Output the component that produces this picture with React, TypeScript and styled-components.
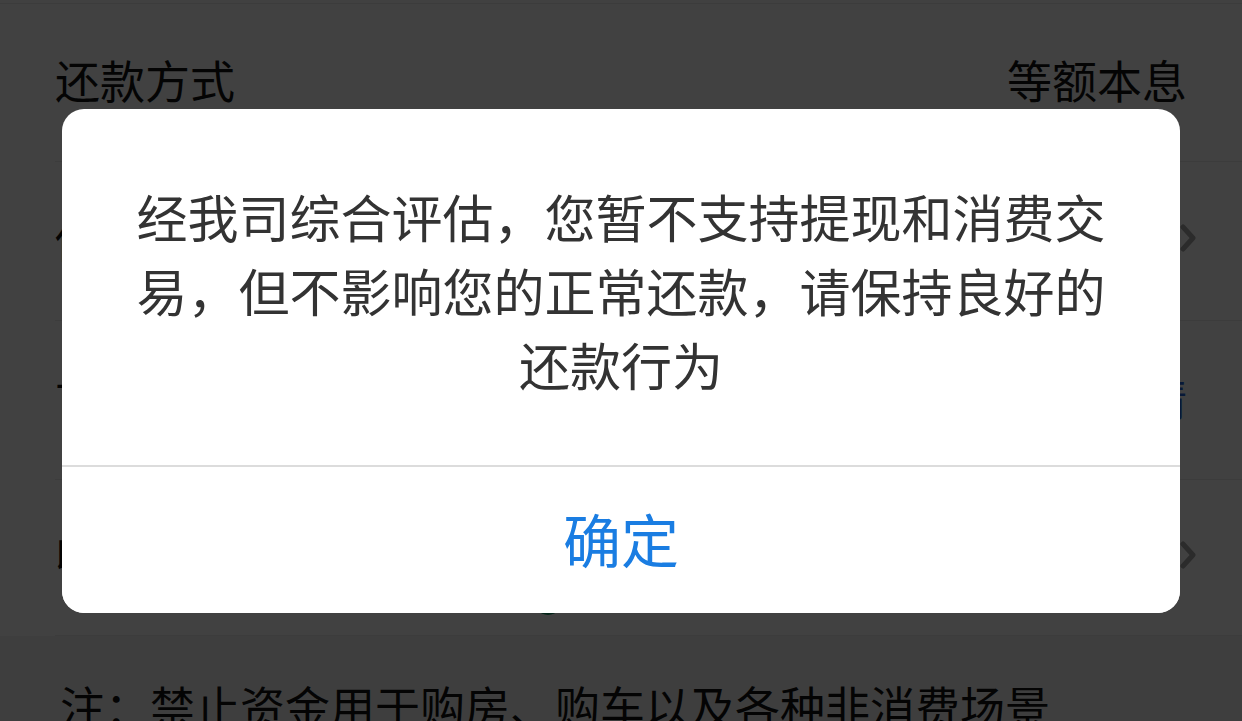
import React from "react";
import styled, { createGlobalStyle } from "styled-components";

const GlobalStyle = createGlobalStyle`
  html, body {
    margin: 0;
    padding: 0;
    width: 1242px;
    height: 721px;
    overflow: hidden;
    background: #ffffff;
    font-family: "Noto Sans CJK SC", "Noto Sans", sans-serif;
  }
`;

const Page = styled.div`
  width: 1242px;
  height: 721px;
  overflow: hidden;
  display: flex;
  flex-direction: column;
  background: #ffffff;
  padding-top: 3px;
  box-sizing: border-box;
`;

const List = styled.div`
  display: flex;
  flex-direction: column;
  border-top: 1px solid #ececec;
`;

const Row = styled.div<{ $h?: number; $arrow?: boolean }>`
  position: relative;
  height: ${(p) => p.$h ?? 158}px;
  box-sizing: border-box;
  margin-left: 55px;
  padding-right: ${(p) => (p.$arrow ? 46 : 55)}px;
  padding-bottom: 6px;
  display: flex;
  align-items: center;
  justify-content: space-between;
  border-bottom: 1px solid #ececec;
  font-size: 45px;
  color: #111111;
`;

const Label = styled.span`
  white-space: nowrap;
`;

const Value = styled.span<{ $link?: boolean }>`
  white-space: nowrap;
  color: ${(p) => (p.$link ? "#1f5fd6" : "#111111")};
`;

const Chevron = styled.svg`
  width: 16px;
  height: 28px;
  display: block;
`;

const BankDot = styled.span`
  position: absolute;
  left: 478px;
  top: 105px;
  width: 30px;
  height: 30px;
  border-radius: 50%;
  background: #0b8a5a;
`;

const Note = styled.div`
  flex: 1;
  background: #f4f4f4;
  padding: 37px 0 0 60px;
  font-size: 45px;
  color: #111111;
  white-space: nowrap;
`;

const Overlay = styled.div`
  position: fixed;
  inset: 0;
  background: rgba(0, 0, 0, 0.745);
  display: flex;
  align-items: center;
  justify-content: center;
`;

const Dialog = styled.div`
  width: 1118px;
  background: #ffffff;
  border-radius: 22px;
  overflow: hidden;
  display: flex;
  flex-direction: column;
`;

const Message = styled.div`
  padding: 70px 70px 64px;
  font-size: 51px;
  line-height: 74px;
  color: #333333;
  text-align: center;
`;

const Divider = styled.div`
  height: 2px;
  background: #dcdcdc;
`;

const ConfirmButton = styled.button`
  height: 146px;
  border: none;
  background: #ffffff;
  font-family: "Noto Sans CJK SC", "Noto Sans", sans-serif;
  font-size: 58px;
  color: #1a7de2;
  display: flex;
  align-items: center;
  justify-content: center;
  padding: 0 0 4px;
  cursor: pointer;
`;

const ChevronIcon = () => (
  <Chevron viewBox="0 0 16 28">
    <path d="M3 3 L13 14 L3 25" fill="none" stroke="#a8a8a8" strokeWidth="5" strokeLinecap="round" strokeLinejoin="round" />
  </Chevron>
);

export default function App() {
  return (
    <>
      <GlobalStyle />
      <Page>
        <List>
          <Row>
            <Label>还款方式</Label>
            <Value>等额本息</Value>
          </Row>
          <Row $h={159} $arrow>
            <Label>借款用途</Label>
            <ChevronIcon />
          </Row>
          <Row $h={159}>
            <Label>首期还款日</Label>
            <Value $link>详情</Value>
          </Row>
          <Row $h={156} $arrow>
            <Label>收款银行卡</Label>
            <ChevronIcon />
            <BankDot />
          </Row>
        </List>
        <Note>注：禁止资金用于购房、购车以及各种非消费场景</Note>
      </Page>
      <Overlay>
        <Dialog>
          <Message>
            经我司综合评估，您暂不支持提现和消费交易，但不影响您的正常还款，请保持良好的还款行为
          </Message>
          <Divider />
          <ConfirmButton>确定</ConfirmButton>
        </Dialog>
      </Overlay>
    </>
  );
}
